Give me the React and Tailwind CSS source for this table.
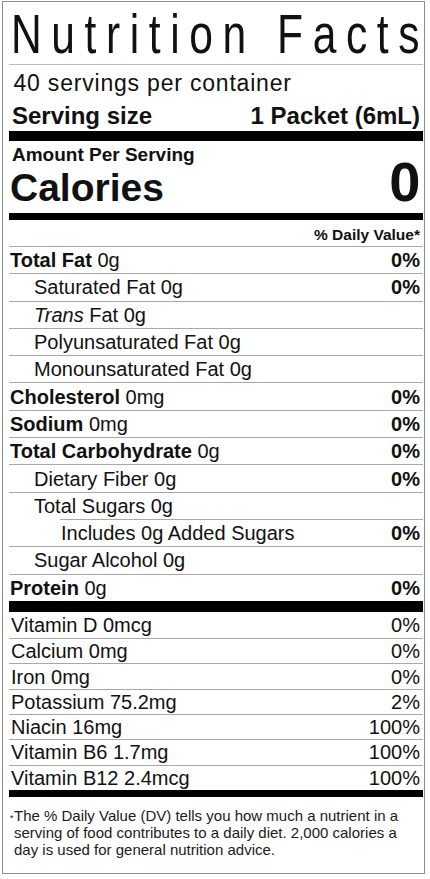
import React from "react";

function NRow({ children, pct, indent, sub }) {
  const pad = sub ? "ml-[51px] pl-[1px]" : indent ? "pl-[25px]" : "pl-[1px]";
  return (
    <div className={`flex h-[27.3px] items-center justify-between border-t border-[#a8a8a8] pr-[3px] text-[20px] leading-[24px] ${pad}`}>
      <span className="whitespace-nowrap">{children}</span>
      {pct ? <span className="font-bold">{pct}</span> : null}
    </div>
  );
}

function VRow({ label, pct, first }) {
  return (
    <div
      className={
        first
          ? "flex h-[26.3px] items-center justify-between pl-[2px] pr-[3px] text-[20px] leading-[24px]"
          : "flex h-[25.3px] items-center justify-between border-t border-[#a8a8a8] pl-[2px] pr-[3px] text-[20px] leading-[24px]"
      }
    >
      <span>{label}</span>
      <span>{pct}</span>
    </div>
  );
}

export default function App() {
  return (
    <div className="h-[879px] w-[430px] overflow-hidden bg-white pl-[2px] pt-[1px] font-['Liberation_Sans',Arial,sans-serif] text-[#111]">
      <div className="h-[873px] w-[423px] border border-[#8c8c8c] pl-[6px] pr-[1px]">
        {/* Title */}
        <div className="h-[63px] border-b border-[#bdbdbd] pl-[2px] pt-[4px]">
          <div className="w-max origin-left scale-x-[0.76] whitespace-nowrap text-[56px] leading-[56px] tracking-[12.6px]">
            Nutrition Facts
          </div>
        </div>

        {/* Servings */}
        <div className="h-[66px] pt-[5px]">
          <div className="pl-[4.5px] text-[23px] leading-[26px] tracking-[0.8px]">40 servings per container</div>
          <div className="mt-[6px] flex justify-between pl-[3px] pr-[3px] text-[24px] font-bold leading-[28px]">
            <span>Serving size</span>
            <span>1 Packet (6mL)</span>
          </div>
        </div>
        <div className="h-[10px] bg-black" />

        {/* Calories */}
        <div className="h-[72px] pt-[5px]">
          <div className="pl-[3px] text-[19px] font-bold leading-[18px]">Amount Per Serving</div>
          <div className="flex items-baseline justify-between pl-[1px] pr-[2.5px] font-bold leading-[36px]">
            <span className="text-[39px]">Calories</span>
            <span className="text-[56px]">0</span>
          </div>
        </div>
        <div className="h-[7px] bg-black" />

        <div className="h-[26px] pr-[3px] pt-[5px] text-right text-[15.5px] font-bold leading-[20px]">% Daily Value*</div>

        <NRow pct="0%"><b>Total Fat</b> 0g</NRow>
        <NRow indent pct="0%">Saturated Fat 0g</NRow>
        <NRow indent><i>Trans</i> Fat 0g</NRow>
        <NRow indent>Polyunsaturated Fat 0g</NRow>
        <NRow indent>Monounsaturated Fat 0g</NRow>
        <NRow pct="0%"><b>Cholesterol</b> 0mg</NRow>
        <NRow pct="0%"><b>Sodium</b> 0mg</NRow>
        <NRow pct="0%"><b>Total Carbohydrate</b> 0g</NRow>
        <NRow indent pct="0%">Dietary Fiber 0g</NRow>
        <NRow indent>Total Sugars 0g</NRow>
        <NRow sub pct="0%">Includes 0g Added Sugars</NRow>
        <NRow indent>Sugar Alcohol 0g</NRow>
        <NRow pct="0%"><b>Protein</b> 0g</NRow>

        <div className="h-[11px] bg-black" />

        <VRow first label="Vitamin D 0mcg" pct="0%" />
        <VRow label="Calcium 0mg" pct="0%" />
        <VRow label="Iron 0mg" pct="0%" />
        <VRow label="Potassium 75.2mg" pct="2%" />
        <VRow label="Niacin 16mg" pct="100%" />
        <VRow label="Vitamin B6 1.7mg" pct="100%" />
        <VRow label="Vitamin B12 2.4mcg" pct="100%" />

        <div className="h-[7px] bg-black" />

        <div className="flex pl-[1px] pt-[10px] text-[15px] leading-[17px] text-[#1a1a1a]">
          <span className="w-[4px] shrink-0 pt-[3px] text-[9px] leading-[17px]">*</span>
          <p>
            The % Daily Value (DV) tells you how much a nutrient in a
            <br />
            serving of food contributes to a daily diet. 2,000 calories a
            <br />
            day is used for general nutrition advice.
          </p>
        </div>
      </div>
    </div>
  );
}
